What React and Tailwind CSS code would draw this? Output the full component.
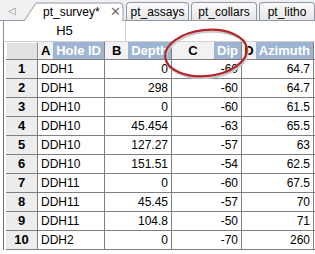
import React from "react";

const rows = [
  ["DDH1", "0", "-60", "64.7"],
  ["DDH1", "298", "-60", "64.7"],
  ["DDH10", "0", "-60", "61.5"],
  ["DDH10", "45.454", "-63", "65.5"],
  ["DDH10", "127.27", "-57", "63"],
  ["DDH10", "151.51", "-54", "62.5"],
  ["DDH11", "0", "-60", "67.5"],
  ["DDH11", "45.45", "-57", "70"],
  ["DDH11", "104.8", "-50", "71"],
  ["DDH2", "0", "-70", "260"],
];

const cols = [
  { l: "A", n: "Hole ID", w: "w-[67px]" },
  { l: "B", n: "Depth", w: "w-[67px]" },
  { l: "C", n: "Dip", w: "w-[70px]" },
  { l: "D", n: "Azimuth", w: "w-[72px]" },
];

function Tab({ label, w }) {
  return (
    <div
      className={
        w +
        " h-[18px] flex items-center justify-center border border-b-0 border-[#8f9aa8] rounded-t-[4px] text-[12px] text-black bg-gradient-to-b from-[#fbfbfb] to-[#e6e6e6] shrink-0"
      }
    >
      {label}
    </div>
  );
}

export default function App() {
  return (
    <div
      className="relative w-[315px] h-[254px] overflow-hidden bg-white"
      style={{ fontFamily: '"Liberation Sans", Arial, sans-serif' }}
    >
      {/* tab bar */}
      <div className="relative h-[21px] flex items-end bg-[#f0f0f0] border-b border-[#8f9aa8]">
        <div className="w-[24px] h-full flex items-center justify-center text-[#909090] text-[10px] shrink-0">◁</div>
        <div className="relative w-[100px] h-[19px] shrink-0 flex items-center text-[12px] text-black mb-[-1px] z-10">
          <svg className="absolute left-0 top-0" width="100" height="19">
            <path d="M0 19 L12 1 L96 1 Q99 1 99 4 L99 19" fill="#ffffff" stroke="#8f9aa8" strokeWidth="1" />
          </svg>
          <span className="relative pl-[19px]">pt_survey*</span>
          <span className="relative ml-[10px] text-[#707070] text-[13px] leading-none">✕</span>
        </div>
        <div className="flex items-end gap-[2px] ml-[2px]">
          <Tab label="pt_assays" w="w-[63px]" />
          <Tab label="pt_collars" w="w-[66px]" />
          <Tab label="pt_litho" w="w-[56px]" />
          <Tab label="" w="w-[20px]" />
        </div>
      </div>
      {/* cell ref bar */}
      <div className="h-[21px] flex bg-white border-l border-[#8f8f8f] ml-[3px]">
        <div className="w-[122px] flex items-center justify-center text-[13px] border-r border-b border-[#d0d0d0]">H5</div>
        <div className="flex-1 border-b border-[#d0d0d0]" />
      </div>
      {/* grid */}
      <div className="flex flex-col ml-[3px] border-l border-[#707070] pl-[2px] bg-white text-[12px] text-black">
        <div className="flex h-[18px] border-b border-[#808080]">
          <div className="w-[32px] bg-[#e2e2e2] border-t border-l border-white border-r border-r-[#909090]" />
          {cols.map((c) => (
            <div key={c.l} className={c.w + " flex border-r border-[#808080] font-bold text-[13px]"}>
              <div className="flex-1 bg-[#f2f2f2] flex items-center justify-center text-black">{c.l}</div>
              <div className="bg-[#9db5d2] text-white flex items-center px-[3px]">{c.n}</div>
            </div>
          ))}
        </div>
        {rows.map((r, i) => (
          <div key={i} className="flex h-[19px] border-b border-[#808080]">
            <div className="w-[32px] bg-[#ededed] flex items-center justify-center font-bold text-[13px] border-r border-[#808080]">
              {i + 1}
            </div>
            <div className="w-[67px] flex items-center pl-[3px] border-r border-[#808080]">{r[0]}</div>
            <div className="w-[67px] flex items-center justify-end pr-[3px] border-r border-[#808080]">{r[1]}</div>
            <div className="w-[70px] flex items-center justify-end pr-[3px] border-r border-[#808080]">{r[2]}</div>
            <div className="w-[72px] flex items-center justify-end pr-[3px] border-r border-[#808080]">{r[3]}</div>
          </div>
        ))}
      </div>
      <svg className="absolute left-0 top-0 pointer-events-none" width="315" height="254">
        <ellipse cx="207" cy="55" rx="41" ry="23" fill="none" stroke="#c8c8c8" strokeWidth="2" transform="rotate(-6 207 55)" />
        <ellipse cx="206" cy="53" rx="41" ry="23" fill="none" stroke="#b3252c" strokeWidth="2.2" transform="rotate(-6 206 53)" />
      </svg>
    </div>
  );
}
